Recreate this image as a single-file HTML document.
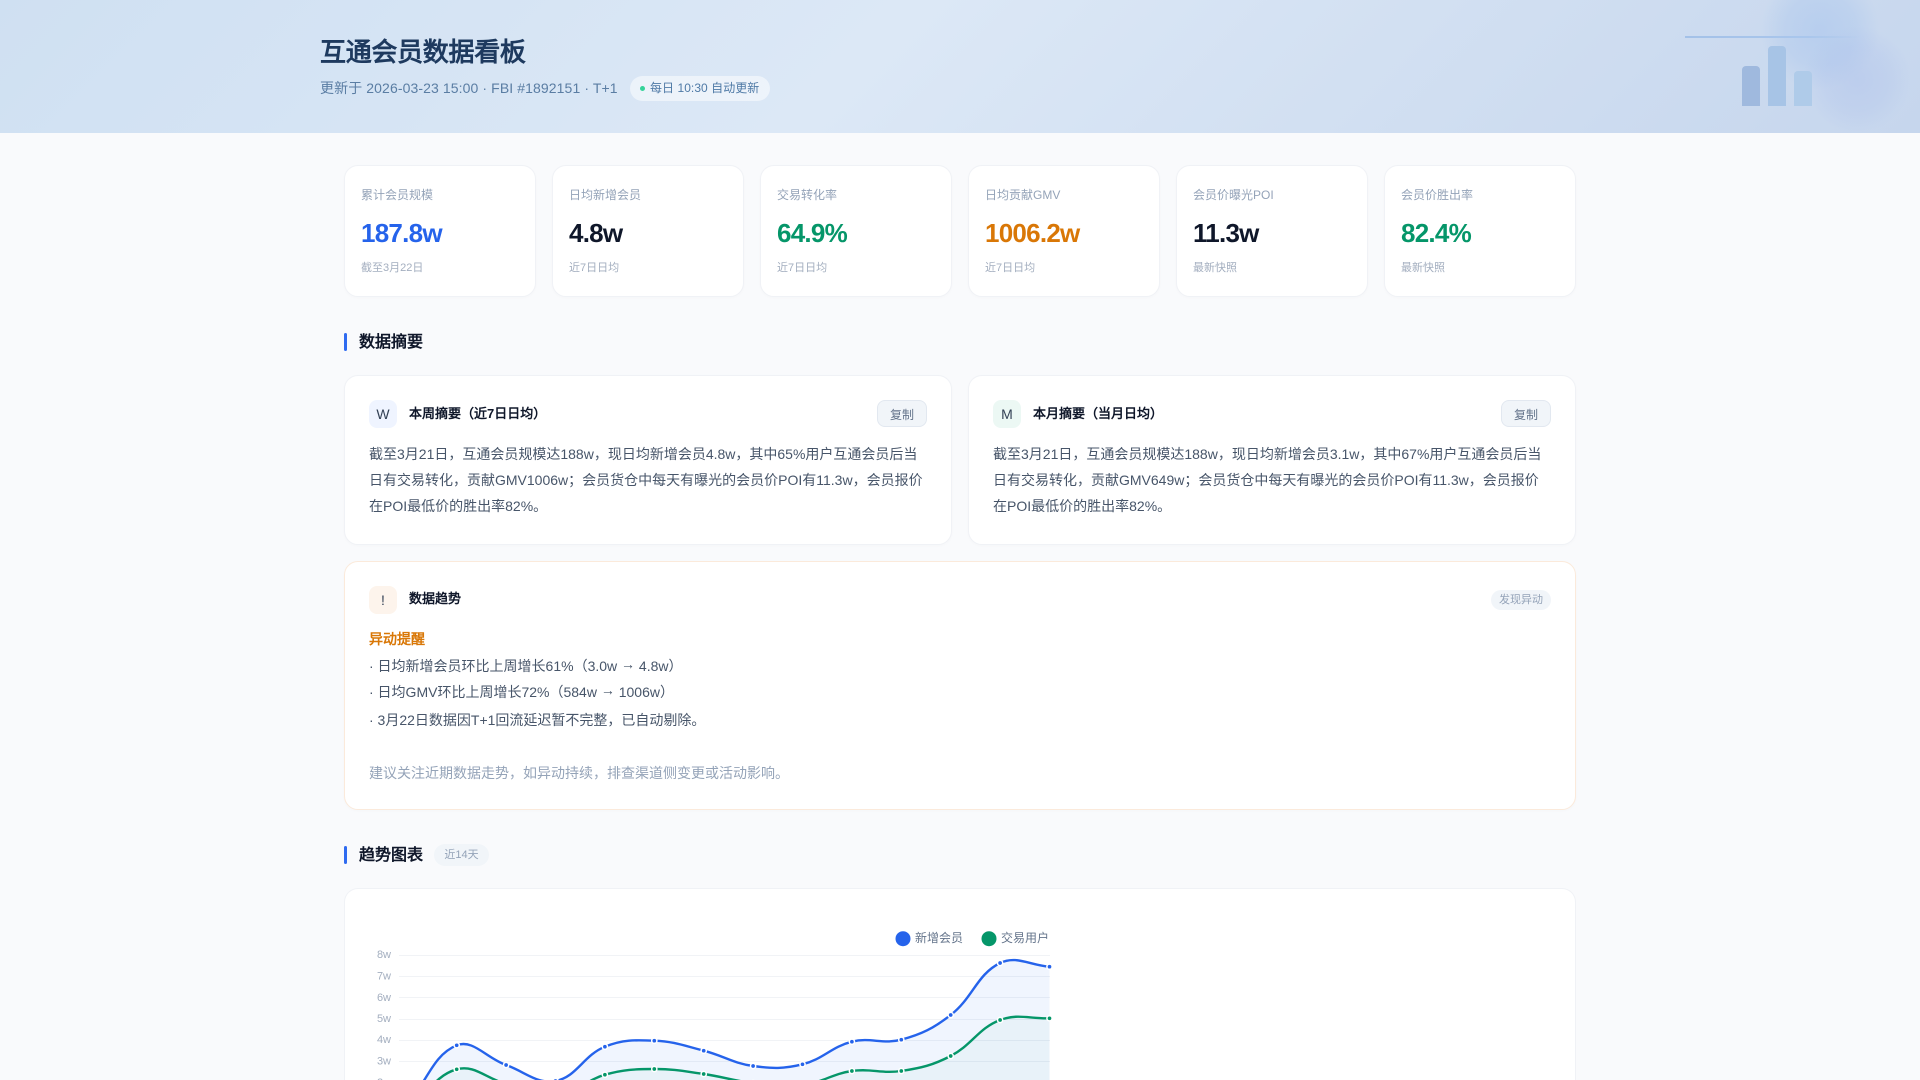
<!DOCTYPE html>
<html lang="zh-CN"><head><meta charset="utf-8"><title>互通会员数据看板</title>
<style>
*{box-sizing:border-box;margin:0;padding:0}
html,body{width:1920px;height:1080px;overflow:hidden;background:#f9fafc}
body{position:relative;font-family:"Liberation Sans","WenQuanYi Zen Hei",sans-serif;color:#0f172a}
.a{position:absolute;white-space:nowrap}
.hdr{position:absolute;left:0;top:0;width:1920px;height:133px;overflow:hidden;background:linear-gradient(135deg,#cfe0f2 0%,#dce8f6 45%,#c6d6ed 100%)}
.card{position:absolute;background:#fff;border:1px solid #f0f2f6;border-radius:14px;box-shadow:0 1px 3px rgba(15,23,42,.02)}
.main{position:absolute;left:0;top:0;width:1920px;height:1080px;overflow:hidden}
.kpi{top:165px;width:192px;height:132px}
.kpi .l{position:absolute;left:16px;top:20px;font-size:12px;line-height:18px;color:#94a3b8;white-space:nowrap}
.kpi .v{position:absolute;left:16px;top:50px;font-size:26px;line-height:34px;font-weight:700;letter-spacing:-.75px;white-space:nowrap}
.kpi .s{position:absolute;left:16px;top:93px;font-size:11px;line-height:18px;color:#a3aebf;white-space:nowrap}
.bar{position:absolute;left:344px;width:3px;height:18px;border-radius:2px;background:#2f6bf0}
.st{position:absolute;left:359px;font-size:16px;line-height:22px;font-weight:700;color:#0f172a;white-space:nowrap}
.ic{position:absolute;width:28px;height:28px;border-radius:8px;font-size:14px;line-height:28px;text-align:center;color:#334155}
.ct{position:absolute;font-size:13px;line-height:20px;font-weight:700;color:#0f172a;white-space:nowrap}
.btn{position:absolute;width:50px;height:27px;border:1px solid #e2e8f0;border-radius:8px;background:#f1f5f9;color:#64748b;font-size:12px;line-height:26px;padding-top:1px;text-align:center}
.p{position:absolute;font-size:14px;line-height:26.6px;color:#475569}
.lines{line-height:26.4px}
.ar{position:relative;top:-2px}
svg{position:absolute;left:0;top:0}
</style></head><body>
<div class="main">
<div class="hdr">
<div style="position:absolute;left:1760px;top:-30px;width:120px;height:120px;border-radius:50%;background:radial-gradient(circle,rgba(147,184,235,.34) 0%,rgba(147,184,235,.22) 42%,rgba(147,184,235,0) 70%)"></div>
<div style="position:absolute;left:1803px;top:25px;width:108px;height:108px;border-radius:50%;background:radial-gradient(circle,rgba(165,185,235,.34) 0%,rgba(165,185,235,.2) 42%,rgba(165,185,235,0) 70%)"></div>
<div style="position:absolute;left:1685px;top:36px;width:175px;height:2px;background:linear-gradient(90deg,#a3c1e8 0%,#a9c6ec 70%,rgba(169,198,236,0) 100%)"></div>
<div style="position:absolute;left:1742px;top:66px;width:18px;height:40px;border-radius:4px 4px 0 0;background:#9fb9de"></div>
<div style="position:absolute;left:1768px;top:46px;width:18px;height:60px;border-radius:4px 4px 0 0;background:#a7c4e6"></div>
<div style="position:absolute;left:1794px;top:71px;width:18px;height:35px;border-radius:4px 4px 0 0;background:#afcbe9"></div>
<div class="a" style="left:320px;top:33px;font-size:26px;line-height:38px;font-weight:700;letter-spacing:-.3px;color:#1e3a5f">互通会员数据看板</div>
<div class="a" style="left:320px;top:78px;font-size:14px;line-height:20px;letter-spacing:.1px;color:#5a7da3">更新于 2026-03-23 15:00 · FBI #1892151 · T+1</div>
<div style="position:absolute;left:630px;top:76px;width:140px;height:25px;border-radius:13px;background:rgba(255,255,255,.5)"></div>
<div style="position:absolute;left:640px;top:86px;width:5px;height:5px;border-radius:50%;background:#34d399"></div>
<div class="a" style="left:650px;top:78px;font-size:12px;line-height:20px;letter-spacing:.05px;color:#4f7aa6">每日 10:30 自动更新</div>
</div>

<div class="card kpi" style="left:344px"><div class="l">累计会员规模</div><div class="v" style="color:#2563eb">187.8w</div><div class="s">截至3月22日</div></div>
<div class="card kpi" style="left:552px"><div class="l">日均新增会员</div><div class="v">4.8w</div><div class="s">近7日日均</div></div>
<div class="card kpi" style="left:760px"><div class="l">交易转化率</div><div class="v" style="color:#059669">64.9%</div><div class="s">近7日日均</div></div>
<div class="card kpi" style="left:968px"><div class="l">日均贡献GMV</div><div class="v" style="color:#d97706">1006.2w</div><div class="s">近7日日均</div></div>
<div class="card kpi" style="left:1176px"><div class="l">会员价曝光POI</div><div class="v">11.3w</div><div class="s">最新快照</div></div>
<div class="card kpi" style="left:1384px"><div class="l">会员价胜出率</div><div class="v" style="color:#059669">82.4%</div><div class="s">最新快照</div></div>

<div class="bar" style="top:333px"></div><div class="st" style="top:332px">数据摘要</div>

<div class="card" style="left:344px;top:375px;width:608px;height:170px"></div>
<div class="ic" style="left:369px;top:400px;background:#eff4ff">W</div>
<div class="ct" style="left:409px;top:404px">本周摘要（近7日日均）</div>
<div class="btn" style="left:877px;top:400px">复制</div>
<div class="p lines" style="left:369px;top:440.5px;width:558px">截至3月21日，互通会员规模达188w，现日均新增会员4.8w，其中65%用户互通会员后当日有交易转化，贡献GMV1006w；会员货仓中每天有曝光的会员价POI有11.3w，会员报价在POI最低价的胜出率82%。</div>

<div class="card" style="left:968px;top:375px;width:608px;height:170px"></div>
<div class="ic" style="left:993px;top:400px;background:#ecf8f4">M</div>
<div class="ct" style="left:1033px;top:404px">本月摘要（当月日均）</div>
<div class="btn" style="left:1501px;top:400px">复制</div>
<div class="p lines" style="left:993px;top:440.5px;width:558px">截至3月21日，互通会员规模达188w，现日均新增会员3.1w，其中67%用户互通会员后当日有交易转化，贡献GMV649w；会员货仓中每天有曝光的会员价POI有11.3w，会员报价在POI最低价的胜出率82%。</div>

<div class="card" style="left:344px;top:561px;width:1232px;height:249px;border-color:#fbeadb"></div>
<div class="ic" style="left:369px;top:586px;background:#fdf4ec">!</div>
<div class="ct" style="left:409px;top:589px">数据趋势</div>
<div class="a" style="left:1491px;top:590px;width:60px;height:20px;border-radius:10px;background:#f1f5f9;color:#94a3b8;font-size:11px;line-height:20px;text-align:center">发现异动</div>
<div class="p a" style="left:369px;top:626px;color:#d97706;font-weight:700">异动提醒</div>
<div class="p a" style="left:369px;top:653px">· 日均新增会员环比上周增长61%（3.0w <span class="ar">→</span> 4.8w）</div>
<div class="p a" style="left:369px;top:679px">· 日均GMV环比上周增长72%（584w <span class="ar">→</span> 1006w）</div>
<div class="p a" style="left:369px;top:707px">· 3月22日数据因T+1回流延迟暂不完整，已自动剔除。</div>
<div class="p a" style="left:369px;top:760px;color:#94a3b8">建议关注近期数据走势，如异动持续，排查渠道侧变更或活动影响。</div>

<div class="bar" style="top:846px"></div><div class="st" style="top:845px">趋势图表</div>
<div class="a" style="left:434px;top:844px;width:55px;height:22px;border-radius:11px;background:#f1f5f9;color:#94a3b8;font-size:11px;line-height:22px;text-align:center">近14天</div>

<div class="card" style="left:344px;top:888px;width:1232px;height:192px;border-bottom:0;border-radius:14px 14px 0 0;box-shadow:none"></div>

<svg width="1920" height="1080" viewBox="0 0 1920 1080" font-family="'Liberation Sans','WenQuanYi Zen Hei',sans-serif">
<g stroke="#f1f3f6" stroke-width="1">
<path d="M399 955.5H1050M399 976.5H1050M399 997.5H1050M399 1019.5H1050M399 1040.5H1050M399 1061.5H1050"/>
</g>
<g fill="#a3aebf" font-size="11" text-anchor="end">
<text x="391" y="958">8w</text><text x="391" y="979.5">7w</text><text x="391" y="1001">6w</text><text x="391" y="1022">5w</text><text x="391" y="1043">4w</text><text x="391" y="1064.5">3w</text><text x="391" y="1086">2w</text>
</g>
<path fill="rgba(37,99,235,.065)" d="M407.3 1105C427.1 1081.1 433.3 1054.8 456.7 1045.3C472.8 1038.8 486.1 1057.8 506.1 1065C525.6 1072.1 537.2 1084.4 555.5 1081C576.7 1077.1 583.3 1055.5 604.9 1046.7C622.8 1039.4 634.7 1039.9 654.3 1040.7C674.2 1041.5 684.2 1045.7 703.7 1050.7C723.7 1055.8 732.9 1063.2 753.1 1066C772.4 1068.7 783.7 1068.9 802.5 1064.3C823.2 1059.2 831.2 1046.9 851.9 1041.7C870.7 1037 882.6 1044.7 901.3 1039.7C922.1 1034.1 933.5 1028.3 950.7 1015C973 997.7 976.8 974.4 1000.1 963C1016.3 955.1 1029.7 965.2 1049.5 966.7V1120H407.3Z"/>
<path fill="rgba(5,150,105,.03)" d="M407.3 1112C427.1 1094.9 434.7 1075.5 456.7 1069.3C474.2 1064.3 486.1 1078.4 506.1 1084C525.8 1089.5 536.3 1098.8 555.5 1097C575.9 1095.1 584.3 1080.6 604.9 1074.7C623.8 1069.4 634.6 1069.1 654.3 1069C674.1 1068.9 684.1 1071.2 703.7 1074C723.6 1076.8 733.1 1080.8 753.1 1083C772.7 1085.2 783.5 1087.3 802.5 1085C823 1082.5 831.7 1073.9 851.9 1071C871.3 1068.3 882 1073.9 901.3 1071C921.5 1067.9 932.6 1065.3 950.7 1056C972.1 1044.9 978.3 1028.3 1000.1 1020C1017.8 1013.3 1029.7 1019 1049.5 1018.3V1120H407.3Z"/>
<path fill="none" stroke="#059669" stroke-width="2.4" d="M407.3 1112C427.1 1094.9 434.7 1075.5 456.7 1069.3C474.2 1064.3 486.1 1078.4 506.1 1084C525.8 1089.5 536.3 1098.8 555.5 1097C575.9 1095.1 584.3 1080.6 604.9 1074.7C623.8 1069.4 634.6 1069.1 654.3 1069C674.1 1068.9 684.1 1071.2 703.7 1074C723.6 1076.8 733.1 1080.8 753.1 1083C772.7 1085.2 783.5 1087.3 802.5 1085C823 1082.5 831.7 1073.9 851.9 1071C871.3 1068.3 882 1073.9 901.3 1071C921.5 1067.9 932.6 1065.3 950.7 1056C972.1 1044.9 978.3 1028.3 1000.1 1020C1017.8 1013.3 1029.7 1019 1049.5 1018.3"/>
<path fill="none" stroke="#2563eb" stroke-width="2.4" d="M407.3 1105C427.1 1081.1 433.3 1054.8 456.7 1045.3C472.8 1038.8 486.1 1057.8 506.1 1065C525.6 1072.1 537.2 1084.4 555.5 1081C576.7 1077.1 583.3 1055.5 604.9 1046.7C622.8 1039.4 634.7 1039.9 654.3 1040.7C674.2 1041.5 684.2 1045.7 703.7 1050.7C723.7 1055.8 732.9 1063.2 753.1 1066C772.4 1068.7 783.7 1068.9 802.5 1064.3C823.2 1059.2 831.2 1046.9 851.9 1041.7C870.7 1037 882.6 1044.7 901.3 1039.7C922.1 1034.1 933.5 1028.3 950.7 1015C973 997.7 976.8 974.4 1000.1 963C1016.3 955.1 1029.7 965.2 1049.5 966.7"/>
<g fill="#059669" stroke="#fff" stroke-width="1.5">
<circle cx="456.7" cy="1069.3" r="2.6"/><circle cx="506.1" cy="1084" r="2.6"/><circle cx="604.9" cy="1074.7" r="2.6"/><circle cx="654.3" cy="1069" r="2.6"/><circle cx="703.7" cy="1074" r="2.6"/><circle cx="753.1" cy="1083" r="2.6"/><circle cx="851.9" cy="1071" r="2.6"/><circle cx="901.3" cy="1071" r="2.6"/><circle cx="950.7" cy="1056" r="2.6"/><circle cx="1000.1" cy="1020" r="2.6"/><circle cx="1049.5" cy="1018.3" r="2.6"/>
</g>
<g fill="#2563eb" stroke="#fff" stroke-width="1.5">
<circle cx="456.7" cy="1045.3" r="2.6"/><circle cx="506.1" cy="1065" r="2.6"/><circle cx="555.5" cy="1081" r="2.6"/><circle cx="604.9" cy="1046.7" r="2.6"/><circle cx="654.3" cy="1040.7" r="2.6"/><circle cx="703.7" cy="1050.7" r="2.6"/><circle cx="753.1" cy="1066" r="2.6"/><circle cx="802.5" cy="1064.3" r="2.6"/><circle cx="851.9" cy="1041.7" r="2.6"/><circle cx="901.3" cy="1039.7" r="2.6"/><circle cx="950.7" cy="1015" r="2.6"/><circle cx="1000.1" cy="963" r="2.6"/><circle cx="1049.5" cy="966.7" r="2.6"/>
</g>
<circle cx="903" cy="938.7" r="7.5" fill="#2563eb"/><circle cx="989" cy="938.7" r="7.5" fill="#059669"/>
<g fill="#64748b" font-size="12"><text x="915" y="942">新增会员</text><text x="1001" y="942">交易用户</text></g>
</svg>
</div>
</body></html>
